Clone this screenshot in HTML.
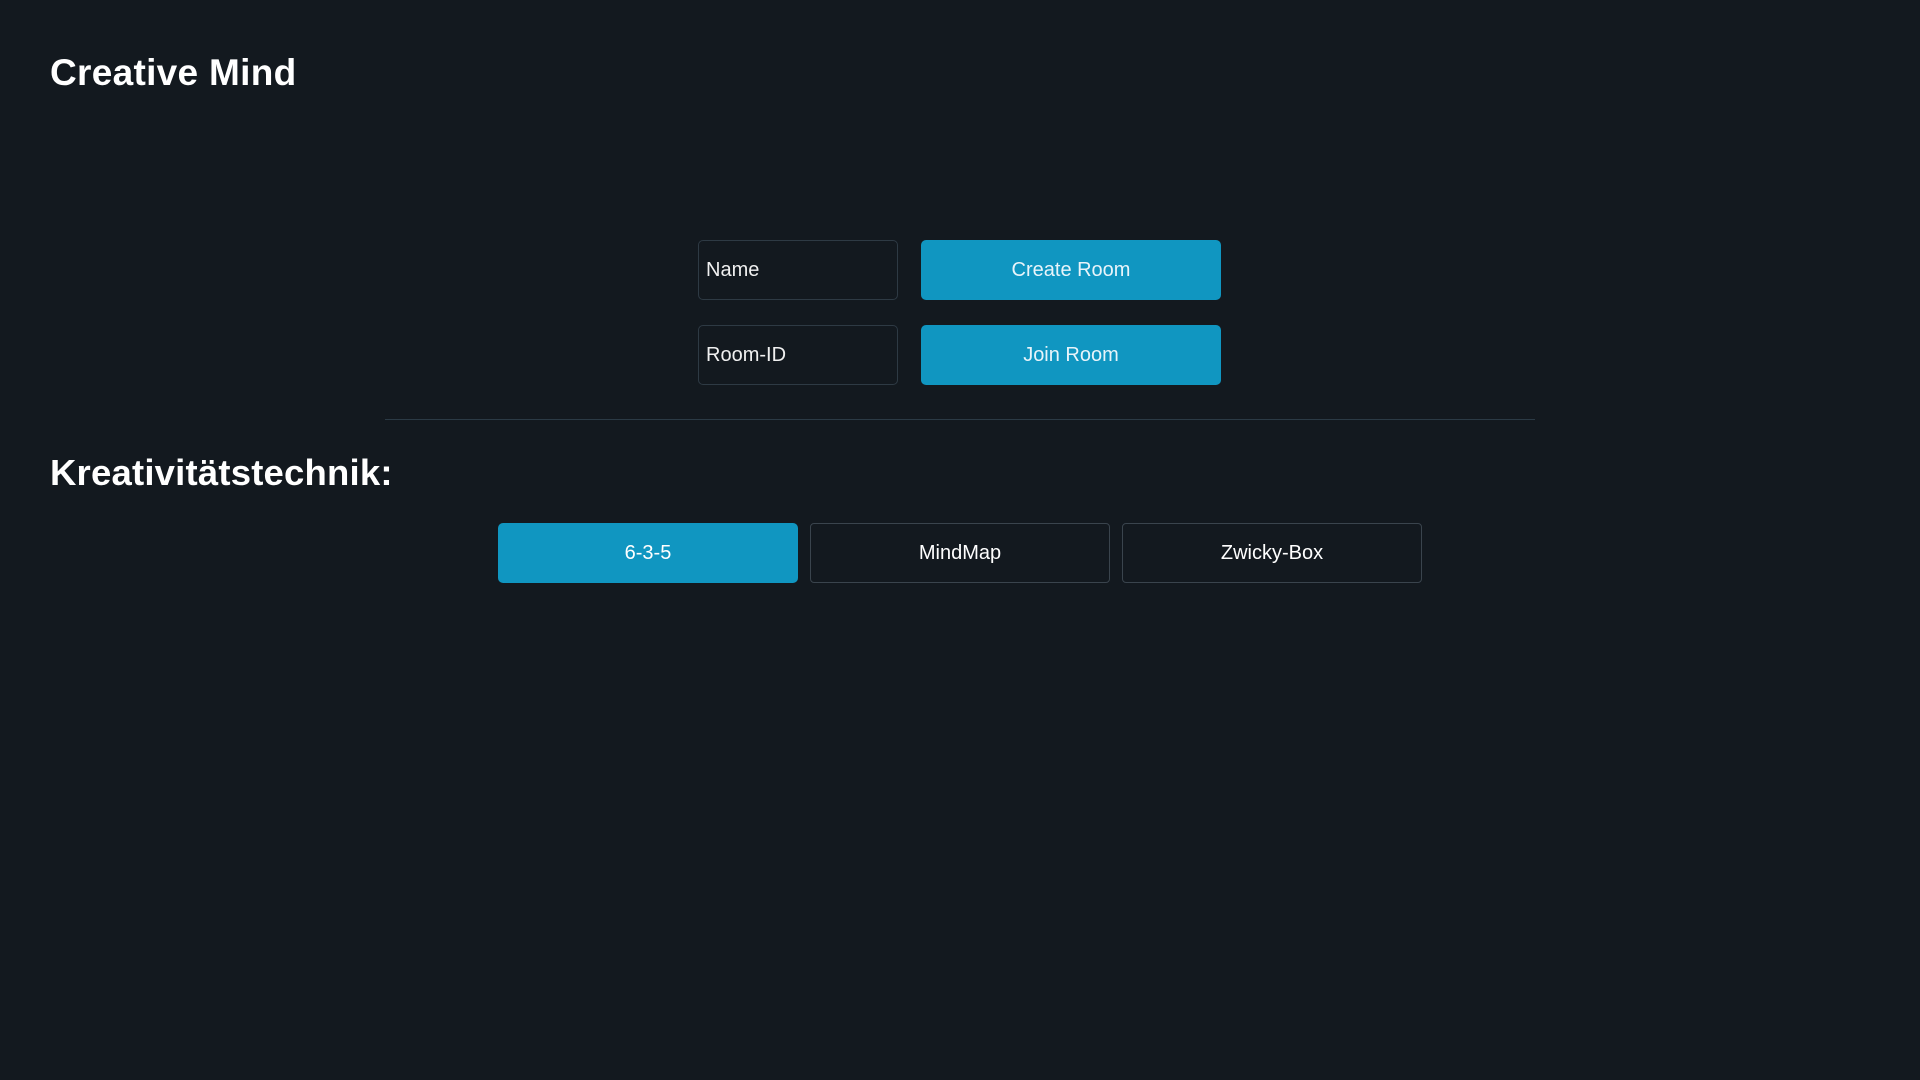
<!DOCTYPE html>
<html><head><meta charset="utf-8"><style>
html,body{margin:0;padding:0;width:1920px;height:1080px;background:#13191f;overflow:hidden;font-family:"Liberation Sans",sans-serif;color:#fff}
.abs{position:absolute;box-sizing:border-box}
h1,h2{margin:0;font-weight:bold;position:absolute;white-space:nowrap}
.inp{border:1px solid #2e3a44;border-radius:5px;font-size:20px;padding-left:7px;display:flex;align-items:center;color:#f0f0f0}
.btn{background:#1096c1;border-radius:5px;display:flex;align-items:center;justify-content:center;font-size:20px;color:#e8f4fa}
.ob{border:1px solid #3a444d;border-radius:4px;display:flex;align-items:center;justify-content:center;font-size:20px;color:#fff}
</style></head><body>
<h1 style="left:50px;top:52px;font-size:37px;letter-spacing:0.3px">Creative Mind</h1>
<div class="abs inp" style="left:698px;top:240px;width:200px;height:60px">Name</div>
<div class="abs btn" style="left:921px;top:240px;width:300px;height:60px">Create Room</div>
<div class="abs inp" style="left:698px;top:325px;width:200px;height:60px">Room-ID</div>
<div class="abs btn" style="left:921px;top:325px;width:300px;height:60px">Join Room</div>
<div class="abs" style="left:385px;top:419px;width:1150px;height:1px;background:#2b3a45"></div>
<h2 style="left:50px;top:452px;font-size:36.5px;letter-spacing:0.2px">Kreativitätstechnik:</h2>
<div class="abs btn" style="left:498px;top:523px;width:300px;height:60px;color:#fff">6-3-5</div>
<div class="abs ob" style="left:810px;top:523px;width:300px;height:60px">MindMap</div>
<div class="abs ob" style="left:1122px;top:523px;width:300px;height:60px">Zwicky-Box</div>
</body></html>
